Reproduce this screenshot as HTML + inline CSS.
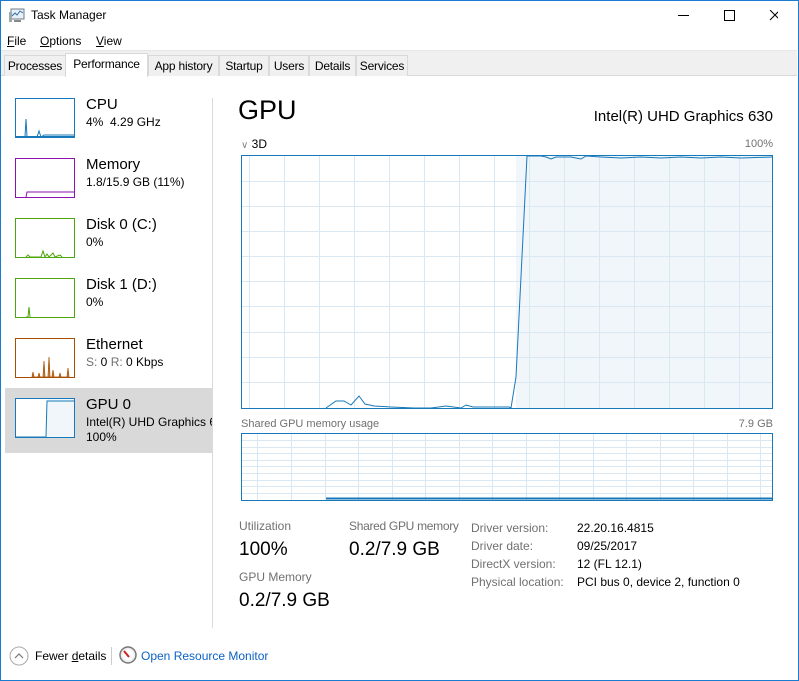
<!DOCTYPE html><html><head><style>
*{margin:0;padding:0;box-sizing:border-box}
body{width:799px;height:681px;background:#fff;font-family:"Liberation Sans",sans-serif;position:relative;overflow:hidden;color:#000}
.a{position:absolute;white-space:nowrap}
.tab{position:absolute;top:55px;height:21px;border:1px solid #d9d9d9;border-bottom:none;background:#f0f0f0;font-size:12px;padding:3px 0 0 0;text-align:center;white-space:nowrap;letter-spacing:-0.2px}
.th{position:absolute;left:15px;width:60px;height:40px;border:1px solid}
.nm{position:absolute;left:86px;font-size:15px;white-space:nowrap}
.sb{position:absolute;left:86px;font-size:12px;white-space:nowrap}
.lab{color:#707070;font-size:12px}
</style></head><body>
<div class="a" style="left:0;top:0;width:799px;height:681px;border:1px solid #1a7cd0"></div>
<svg class="a" style="left:8px;top:8px" width="18" height="16"><rect x="3" y="1" width="13" height="10" fill="#e8f0f6" stroke="#6b7b8c"/><polyline points="4,8 7,5 9,7 12,3 15,5" fill="none" stroke="#2b6fb0"/><rect x="1" y="4" width="3" height="10" fill="#9aa"/><rect x="6" y="12" width="7" height="2" fill="#888"/></svg>
<div class="a" style="left:31px;top:8px;font-size:12px">Task Manager</div>
<svg class="a" style="left:678px;top:10px" width="100" height="14"><line x1="0" y1="5.5" x2="11" y2="5.5" stroke="#000"/><rect x="46.5" y="0.5" width="10" height="10" fill="none" stroke="#000"/><path d="M92 0L102 10M102 0L92 10" stroke="#000"/></svg>
<div class="a" style="left:7px;top:34px;font-size:12px"><u>F</u>ile</div>
<div class="a" style="left:40px;top:34px;font-size:12px"><u>O</u>ptions</div>
<div class="a" style="left:96px;top:34px;font-size:12px"><u>V</u>iew</div>
<div class="a" style="left:1px;top:50px;width:796px;height:26px;background:#f0f0f0;border-top:1px solid #e6e6e6;border-bottom:1px solid #d9d9d9"></div>
<div class="tab" style="left:4px;width:62px">Processes</div>
<div class="tab" style="left:65px;width:83px;top:53px;height:24px;background:#fff;padding-top:3px">Performance</div>
<div class="tab" style="left:148px;width:71px">App history</div>
<div class="tab" style="left:219px;width:50px">Startup</div>
<div class="tab" style="left:269px;width:40px">Users</div>
<div class="tab" style="left:309px;width:47px">Details</div>
<div class="tab" style="left:356px;width:52px">Services</div>

<div class="a" style="left:5px;top:388px;width:207px;height:65px;background:#d9d9d9"></div>
<div class="a" style="left:212px;top:98px;width:1px;height:530px;background:#dadada"></div>

<svg class="th" style="top:98px;border-color:#1779ba" width="60" height="40"><polyline points="0,38 9,38 10,20 11,38 21,38 23,32 25,38 28,36 58,36" fill="none" stroke="#1779ba"/><rect x="0" y="37" width="60" height="2" fill="#1779ba"/></svg>
<div class="nm" style="top:96px">CPU</div><div class="sb" style="top:115px">4%&nbsp; 4.29 GHz</div>
<svg class="th" style="top:158px;border-color:#8b12ae" width="60" height="40"><polyline points="10,38 11,33 58,33" fill="none" stroke="#8b12ae"/></svg>
<div class="nm" style="top:156px">Memory</div><div class="sb" style="top:175px">1.8/15.9 GB (11%)</div>
<svg class="th" style="top:218px;border-color:#4da60c" width="60" height="40"><polyline points="10,38 12,36 14,38 25,38 27,32 29,38 31,35 33,38 37,34 39,38 44,36 46,38" fill="none" stroke="#4da60c"/></svg>
<div class="nm" style="top:216px">Disk 0 (C:)</div><div class="sb" style="top:235px">0%</div>
<svg class="th" style="top:278px;border-color:#4da60c" width="60" height="40"><polyline points="10,38 12,38 13,28 14,38" fill="none" stroke="#4da60c"/></svg>
<div class="nm" style="top:276px">Disk 1 (D:)</div><div class="sb" style="top:295px">0%</div>
<svg class="th" style="top:338px;border-color:#a74f01" width="60" height="40"><path d="M16,38 L17,33 L18,38 L22,38 L23,34 L24,38 L27,38 L28,22 L29,38 L32,38 L33,18 L34,38 L36,38 L37,31 L38,38 L43,38 L44,34 L45,38 L51,38 L52,29 L53,38Z" fill="#d89a63" stroke="#a74f01" stroke-width="0.8"/></svg>
<div class="nm" style="top:336px">Ethernet</div><div class="sb" style="top:355px"><span style="color:#707070">S:</span> 0 <span style="color:#707070">R:</span> 0 Kbps</div>
<svg class="th" style="top:398px;border-color:#1779ba;background:#fff" width="60" height="40"><rect x="31" y="0" width="29" height="39" fill="#f1f6fa"/><polyline points="0,38 30,38 31,2 59,2" fill="none" stroke="#1779ba"/></svg>
<div class="nm" style="top:396px">GPU 0</div><div class="sb" style="top:415px;width:126px;overflow:hidden">Intel(R) UHD Graphics 630</div><div class="sb" style="top:430px">100%</div>

<div class="a" style="left:238px;top:95px;font-size:27px">GPU</div>
<div class="a" style="right:26px;top:108px;font-size:15px">Intel(R) UHD Graphics 630</div>
<div class="a" style="left:241px;top:137px;font-size:12px"><span style="color:#888;font-size:10px">&#8744;</span> 3D</div>
<div class="a lab" style="right:26px;top:138px;font-size:11px">100%</div>
<svg class="a" style="left:241px;top:155px" width="532" height="254">
<rect x="275" y="1" width="256" height="252" fill="#f1f6fa"/>
<g stroke="#d9e8f3" stroke-width="1">
<line x1="8.5" y1="0" x2="8.5" y2="254"/><line x1="43.5" y1="0" x2="43.5" y2="254"/><line x1="78.5" y1="0" x2="78.5" y2="254"/><line x1="113.5" y1="0" x2="113.5" y2="254"/><line x1="148.5" y1="0" x2="148.5" y2="254"/><line x1="183.5" y1="0" x2="183.5" y2="254"/><line x1="218.5" y1="0" x2="218.5" y2="254"/><line x1="253.5" y1="0" x2="253.5" y2="254"/><line x1="288.5" y1="0" x2="288.5" y2="254"/><line x1="323.5" y1="0" x2="323.5" y2="254"/><line x1="358.5" y1="0" x2="358.5" y2="254"/><line x1="393.5" y1="0" x2="393.5" y2="254"/><line x1="428.5" y1="0" x2="428.5" y2="254"/><line x1="463.5" y1="0" x2="463.5" y2="254"/><line x1="498.5" y1="0" x2="498.5" y2="254"/>
<line x1="0" y1="26.5" x2="532" y2="26.5"/><line x1="0" y1="51.5" x2="532" y2="51.5"/><line x1="0" y1="76.5" x2="532" y2="76.5"/><line x1="0" y1="101.5" x2="532" y2="101.5"/><line x1="0" y1="126.5" x2="532" y2="126.5"/><line x1="0" y1="151.5" x2="532" y2="151.5"/><line x1="0" y1="177.5" x2="532" y2="177.5"/><line x1="0" y1="202.5" x2="532" y2="202.5"/><line x1="0" y1="227.5" x2="532" y2="227.5"/>
</g>
<polyline points="85,253 95,246 103,246 110,250 118,241 124,249 133,251 150,252 173,253 190,253 205,251 220,253 225,250 232,252 238,252 246,252 262,252 268,252 270,253 275,222 286,1 300,1 305,2 310,4 315,2 330,2 340,4 345,1 360,2 380,3 400,2 420,3 440,2 460,3 480,2 500,3 531,2" fill="none" stroke="#1779ba" stroke-width="1"/>
<rect x="0.5" y="0.5" width="531" height="253" fill="none" stroke="#1779ba"/>
</svg>
<div class="a lab" style="left:241px;top:418px;font-size:11px">Shared GPU memory usage</div>
<div class="a lab" style="right:26px;top:418px;font-size:11px">7.9 GB</div>
<svg class="a" style="left:241px;top:433px" width="532" height="68">
<g stroke="#d9e8f3" stroke-width="1">
<line x1="16.5" y1="0" x2="16.5" y2="68"/><line x1="50.5" y1="0" x2="50.5" y2="68"/><line x1="84.5" y1="0" x2="84.5" y2="68"/><line x1="117.5" y1="0" x2="117.5" y2="68"/><line x1="151.5" y1="0" x2="151.5" y2="68"/><line x1="184.5" y1="0" x2="184.5" y2="68"/><line x1="218.5" y1="0" x2="218.5" y2="68"/><line x1="251.5" y1="0" x2="251.5" y2="68"/><line x1="285.5" y1="0" x2="285.5" y2="68"/><line x1="318.5" y1="0" x2="318.5" y2="68"/><line x1="352.5" y1="0" x2="352.5" y2="68"/><line x1="385.5" y1="0" x2="385.5" y2="68"/><line x1="419.5" y1="0" x2="419.5" y2="68"/><line x1="452.5" y1="0" x2="452.5" y2="68"/><line x1="486.5" y1="0" x2="486.5" y2="68"/><line x1="519.5" y1="0" x2="519.5" y2="68"/>
<line x1="0" y1="7.5" x2="532" y2="7.5"/><line x1="0" y1="14.5" x2="532" y2="14.5"/><line x1="0" y1="20.5" x2="532" y2="20.5"/><line x1="0" y1="27.5" x2="532" y2="27.5"/><line x1="0" y1="33.5" x2="532" y2="33.5"/><line x1="0" y1="40.5" x2="532" y2="40.5"/><line x1="0" y1="47.5" x2="532" y2="47.5"/><line x1="0" y1="53.5" x2="532" y2="53.5"/><line x1="0" y1="60.5" x2="532" y2="60.5"/>
</g>
<line x1="85" y1="65.5" x2="532" y2="65.5" stroke="#1779ba" stroke-width="2"/>
<rect x="0.5" y="0.5" width="531" height="67" fill="none" stroke="#1779ba"/>
</svg>
<div class="a lab" style="left:239px;top:519px">Utilization</div>
<div class="a" style="left:239px;top:539px;font-size:19px">100%</div>
<div class="a lab" style="left:349px;top:519px;letter-spacing:-0.3px">Shared GPU memory</div>
<div class="a" style="left:349px;top:539px;font-size:19px">0.2/7.9 GB</div>
<div class="a lab" style="left:239px;top:570px">GPU Memory</div>
<div class="a" style="left:239px;top:590px;font-size:19px">0.2/7.9 GB</div>
<div class="a lab" style="left:471px;top:519px;line-height:18px">Driver version:<br>Driver date:<br>DirectX version:<br>Physical location:</div>
<div class="a" style="left:577px;top:519px;font-size:12px;line-height:18px">22.20.16.4815<br>09/25/2017<br>12 (FL 12.1)<br>PCI bus 0, device 2, function 0</div>

<svg class="a" style="left:9px;top:646px" width="20" height="20"><circle cx="10" cy="10" r="9" fill="#fff" stroke="#aaa"/><polyline points="6,12 10,8 14,12" fill="none" stroke="#777" stroke-width="1.2"/></svg>
<div class="a" style="left:35px;top:649px;font-size:12px">Fewer <u>d</u>etails</div>
<div class="a" style="left:111px;top:647px;width:1px;height:18px;background:#ccc"></div>
<svg class="a" style="left:119px;top:646px" width="18" height="18"><circle cx="9" cy="9" r="8" fill="#eee" stroke="#777" stroke-width="1.5"/><circle cx="9" cy="9" r="5.5" fill="#fff"/><line x1="5" y1="5" x2="10" y2="11" stroke="#d02020" stroke-width="2"/></svg>
<div class="a" style="left:141px;top:649px;font-size:12px;color:#0b62c4">Open Resource Monitor</div>
</body></html>
